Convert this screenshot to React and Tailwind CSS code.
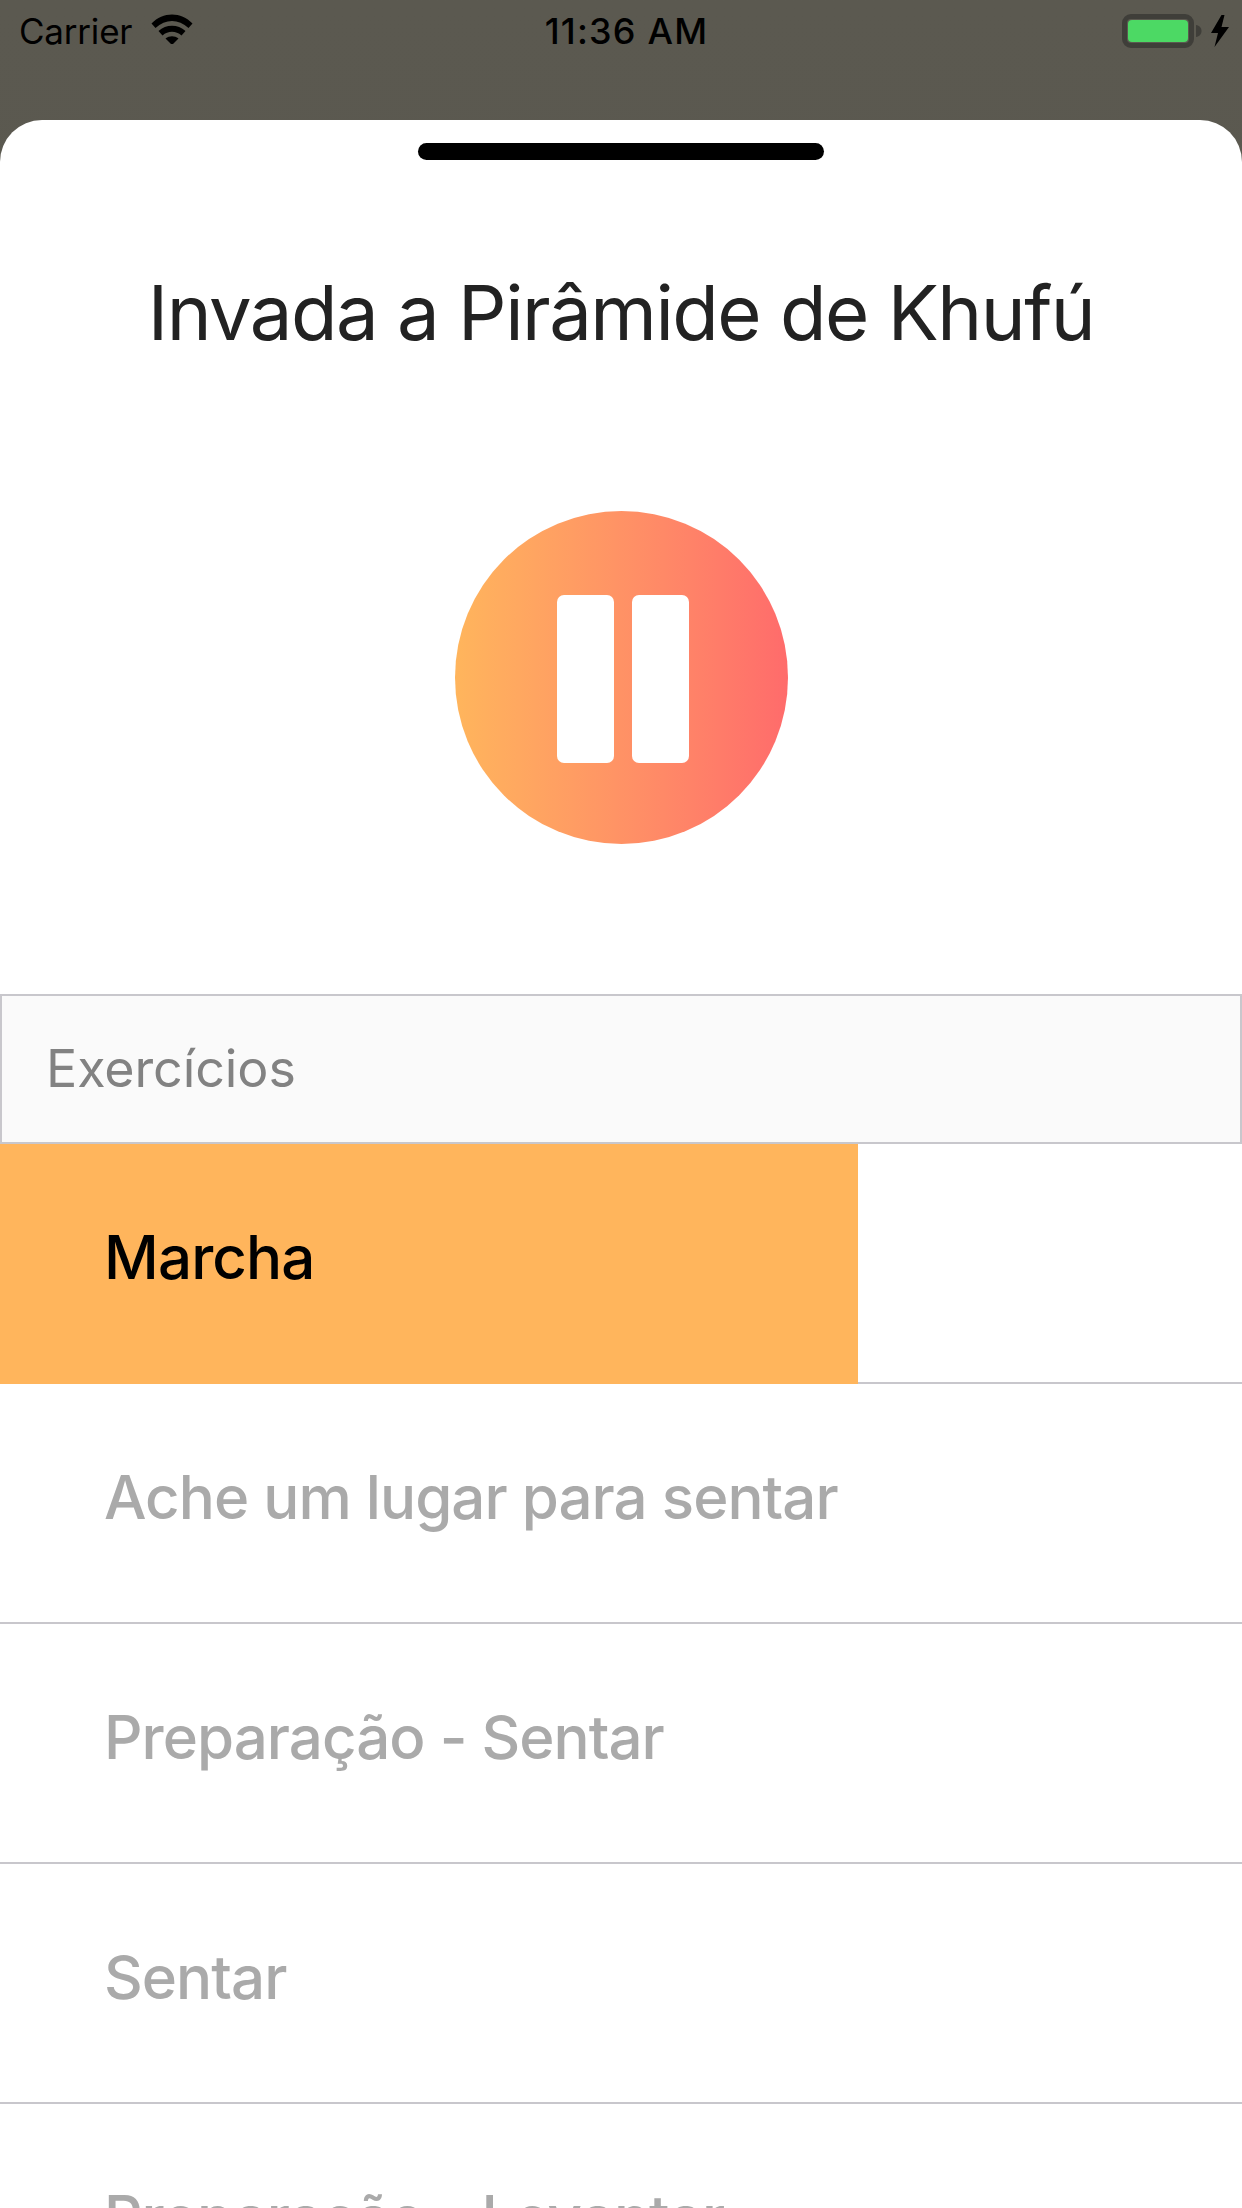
const rows = [
  { label: "Ache um lugar para sentar" },
  { label: "Preparação - Sentar" },
  { label: "Sentar" },
  { label: "Preparação - Levantar" },
];

function Wifi() {
  return (
    <svg width="42" height="30" viewBox="0 0 42 30" className="ml-[19px] mt-[-4px]">
      <path d="M0.5 9.5 C12 -2.5 30 -2.5 41.5 9.5 L37.5 14 C27.5 4.5 14.5 4.5 4.5 14 Z" fill="#000" />
      <path d="M7.5 17 C15 10 27 10 34.5 17 L30.5 21.5 C25 16.5 17 16.5 11.5 21.5 Z" fill="#000" />
      <path d="M14.5 24.5 C18.5 21.5 23.5 21.5 27.5 24.5 L21 31 Z" fill="#000" />
    </svg>
  );
}

function Battery() {
  return (
    <div className="flex items-center">
      <div className="w-[72px] h-[34px] rounded-[9px] border-[5px] border-[#3f3e39] p-[1px] box-border">
        <div className="w-full h-full rounded-[4px] bg-[#4cd964]" />
      </div>
      <svg width="6" height="12" viewBox="0 0 6 12" className="ml-[2px]">
        <path d="M0 0 C3.5 0.5 5.5 3 5.5 6 C5.5 9 3.5 11.5 0 12 Z" fill="#3f3e39" />
      </svg>
      <svg width="18" height="32" viewBox="0 0 18 32" className="ml-[9px]">
        <path d="M10.5 0 L0 18 L7 18 L3.5 32 L18 12 L10.5 12 L13.5 0 Z" fill="#000" />
      </svg>
    </div>
  );
}

export default function App() {
  return (
    <div className="w-[1242px] h-[2208px] overflow-hidden flex flex-col bg-gradient-to-b from-[#5b5950] to-[#56534a] font-['Inter','Liberation_Sans',sans-serif]">
      <div className="h-[120px] shrink-0 pl-[19px] pr-[13px] pt-[12px] relative flex items-start justify-between">
        <div className="flex items-center h-[38px]">
          <span className="text-[35px] leading-[38px] text-black tracking-[-0.2px]">Carrier</span>
          <Wifi />
        </div>
        <span className="absolute left-0 right-0 top-[12px] pl-[11px] text-center text-[36px] leading-[38px] font-medium text-black tracking-[1.2px]">11:36 AM</span>
        <div className="h-[38px] flex items-center">
          <Battery />
        </div>
      </div>

      <div className="flex-1 bg-white rounded-t-[42px] overflow-hidden flex flex-col relative">
        <div className="flex justify-center pt-[23px]">
          <div className="w-[406px] h-[17px] rounded-full bg-black" />
        </div>
        <h1 className="mt-[100px] text-center text-[76px] leading-[104px] font-normal text-[#222222] tracking-[-1.5px]">
          Invada a Pirâmide de Khufú
        </h1>
        <div className="mt-[147px] flex justify-center">
          <div className="ml-[1px] pl-[2px] pt-[2px] w-[333px] h-[333px] box-border rounded-full bg-gradient-to-r from-[#ffb55c] to-[#ff6b6b] flex items-center justify-center gap-[18px]">
            <div className="w-[57px] h-[168px] rounded-[7px] bg-white" />
            <div className="w-[57px] h-[168px] rounded-[7px] bg-white" />
          </div>
        </div>
        <div className="mt-[150px] h-[150px] shrink-0 box-border border-2 border-[#c8c7cc] bg-[#fafafa] flex items-center pl-[44px]">
          <span className="text-[52px] leading-[58px] text-[#828282] tracking-[-0.1px]">Exercícios</span>
        </div>
        <div className="relative h-[240px] shrink-0 border-b-2 border-[#c8c7cc] box-border flex items-center pl-[104px] pb-[12px]">
          <div className="absolute left-0 top-0 bottom-[-2px] w-[858px] bg-[#ffb55c]" />
          <span className="relative text-[60px] leading-[72px] font-medium text-black tracking-[-0.85px]">Marcha</span>
        </div>
        {rows.map((r) => (
          <div key={r.label} className="h-[240px] shrink-0 border-b-2 border-[#c8c7cc] box-border flex items-center pl-[104px] pb-[12px]">
            <span className="text-[60px] leading-[72px] font-medium text-[#aaaaaa] tracking-[-0.95px]">{r.label}</span>
          </div>
        ))}
      </div>
    </div>
  );
}
